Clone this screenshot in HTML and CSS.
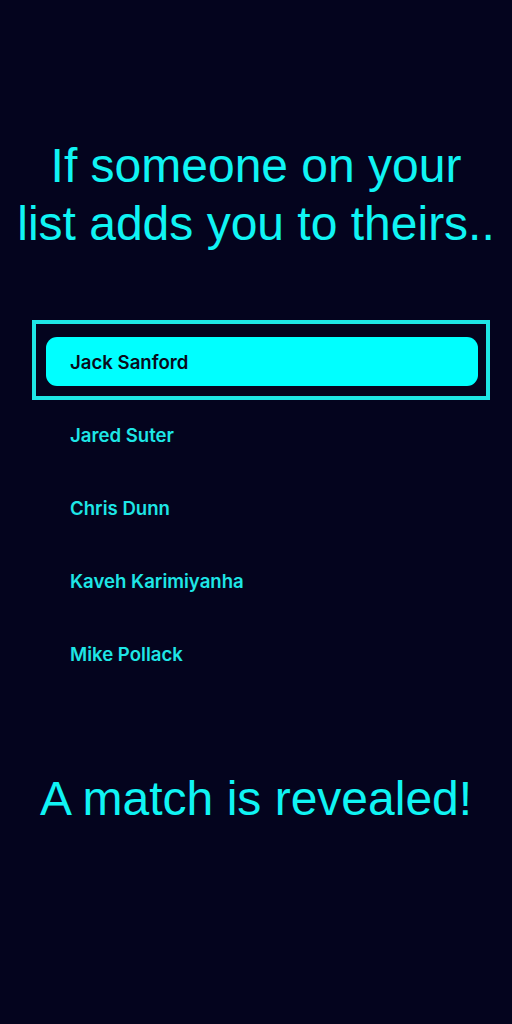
FILE: index.html
```html
<!DOCTYPE html>
<html>
<head>
<meta charset="utf-8">
<link rel="stylesheet" href="styles.css">
</head>
<body>
<main class="screen">
  <h1 class="headline">If someone on your<br>list adds you to theirs..</h1>
  <ul class="list">
    <li class="item item--selected"><span class="pill">Jack Sanford</span></li>
    <li class="item">Jared Suter</li>
    <li class="item">Chris Dunn</li>
    <li class="item">Kaveh Karimiyanha</li>
    <li class="item">Mike Pollack</li>
  </ul>
  <p class="reveal">A match is revealed!</p>
</main>
</body>
</html>
```

FILE: styles.css
```css
html, body {
  margin: 0;
  padding: 0;
  background: #04041e;
}
.screen {
  width: 512px;
  height: 1024px;
  display: flex;
  flex-direction: column;
  align-items: stretch;
  box-sizing: border-box;
  padding-top: 137px;
}
.headline {
  margin: 0;
  font-family: "Liberation Sans", Arial, sans-serif;
  font-weight: 400;
  font-size: 48px;
  line-height: 58px;
  color: #10f4f4;
  text-align: center;
}
.list {
  list-style: none;
  margin: 67px 0 0 0;
  padding: 0;
  display: flex;
  flex-direction: column;
}
.item {
  font-family: Inter, "Noto Sans", sans-serif;
  font-weight: 600;
  font-size: 18.6px;
  color: #1ee6e6;
  padding-left: 70px;
  height: 73px;
  line-height: 73px;
}
.item--selected {
  margin: 0 22px -1px 32px;
  padding: 13px 8px 10px 10px;
  height: auto;
  line-height: normal;
  border: 4px solid #1ee6e6;
}
.pill {
  display: flex;
  align-items: center;
  height: 49px;
  padding-left: 24px;
  border-radius: 11px;
  background: #00ffff;
  color: #0a0a1a;
}
.reveal {
  margin: 79px 0 0 0;
  font-family: "Liberation Sans", Arial, sans-serif;
  font-size: 48px;
  line-height: 58px;
  color: #10f4f4;
  text-align: center;
}
```
